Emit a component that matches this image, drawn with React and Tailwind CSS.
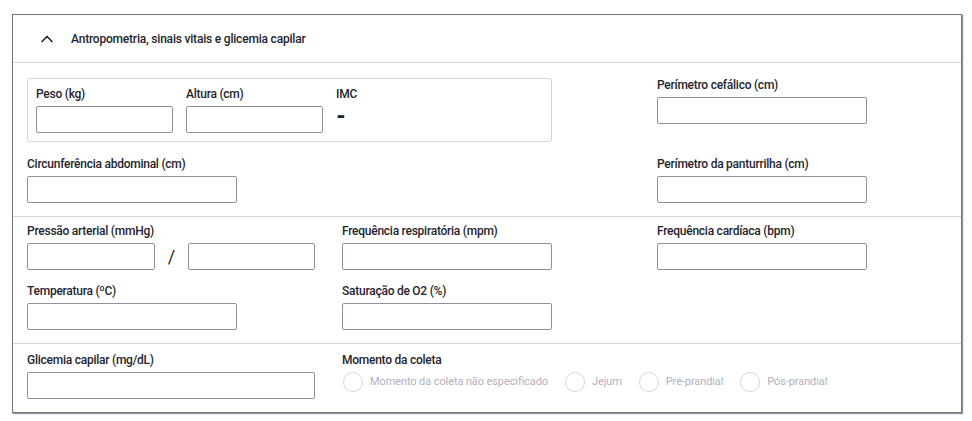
import React from "react";
import { ChevronUp } from "lucide-react";

const Label = ({ children }) => (
  <label className="block h-4 mb-1 text-[12px] leading-4 font-medium tracking-[-0.25px] text-[#24252e] whitespace-nowrap">
    {children}
  </label>
);

const Input = ({ className = "w-[210px]" }) => (
  <input
    type="text"
    className={`block h-[27px] border border-[#8f8fa0] rounded-[2px] bg-white outline-none ${className}`}
  />
);

const Field = ({ label, className }) => (
  <div>
    <Label>{label}</Label>
    <Input className={className} />
  </div>
);

const Radio = ({ label }) => (
  <label className="flex items-center gap-[7px] cursor-pointer">
    <span className="w-5 h-5 ml-px rounded-full border border-[#d3d4de] bg-white" />
    <span className="text-[11px] leading-4 tracking-[-0.1px] text-[#b1b1c1] whitespace-nowrap">
      {label}
    </span>
  </label>
);

const App = () => {
  return (
    <div
      className="min-h-screen bg-white pt-[14px] pl-3"
      style={{ fontFamily: "Roboto, 'Noto Sans', sans-serif" }}
    >
      <div className="w-[950px] bg-white border border-[#73737f] shadow-[1px_1px_1px_rgba(60,60,80,0.55)]">
        {/* header */}
        <div className="h-[48px] flex items-center border-b border-[#d3d4de]">
          <ChevronUp className="ml-[24px] text-[#24252e]" size={20} strokeWidth={2} />
          <span className="ml-[14px] text-[12px] font-medium tracking-[-0.2px] text-[#24252e]">
            Antropometria, sinais vitais e glicemia capilar
          </span>
        </div>

        {/* antropometria */}
        <div className="pl-[14px] pt-[14px] pb-[13px] border-b border-[#d3d4de] grid grid-cols-[630px_1fr] gap-y-[14px] items-start">
          <div className="mt-px w-[525px] border border-[#d3d4de] rounded-[3px] pl-2 pt-[7px] pb-2 flex gap-[13px]">
            <Field label="Peso (kg)" className="w-[137px]" />
            <Field label="Altura (cm)" className="w-[137px]" />
            <div>
              <Label>IMC</Label>
              <div className="text-[22px] leading-[19px] font-black text-[#24252e]">-</div>
            </div>
          </div>
          <Field label="Perímetro cefálico (cm)" />
          <Field label="Circunferência abdominal (cm)" />
          <Field label="Perímetro da panturrilha (cm)" />
        </div>

        {/* sinais vitais */}
        <div className="pl-[14px] pt-[6px] pb-[13px] border-b border-[#d3d4de] grid grid-cols-[315px_315px_1fr] gap-y-[13px]">
          <div>
            <Label>Pressão arterial (mmHg)</Label>
            <div className="flex items-center w-[288px]">
              <Input className="w-[128px]" />
              <span className="flex-1 text-center text-[18px] text-[#24252e]">/</span>
              <Input className="w-[127px]" />
            </div>
          </div>
          <Field label="Frequência respiratória (mpm)" />
          <Field label="Frequência cardíaca (bpm)" />
          <Field label="Temperatura (ºC)" />
          <Field label="Saturação de O2 (%)" />
        </div>

        {/* glicemia */}
        <div className="pl-[14px] pt-[8px] pb-[13px] grid grid-cols-[315px_1fr]">
          <Field label="Glicemia capilar (mg/dL)" className="w-[288px]" />
          <div>
            <Label>Momento da coleta</Label>
            <div className="flex items-center gap-[16px]">
              <Radio label="Momento da coleta não especificado" />
              <Radio label="Jejum" />
              <Radio label="Pré-prandial" />
              <Radio label="Pós-prandial" />
            </div>
          </div>
        </div>
      </div>
    </div>
  );
};

export default App;
